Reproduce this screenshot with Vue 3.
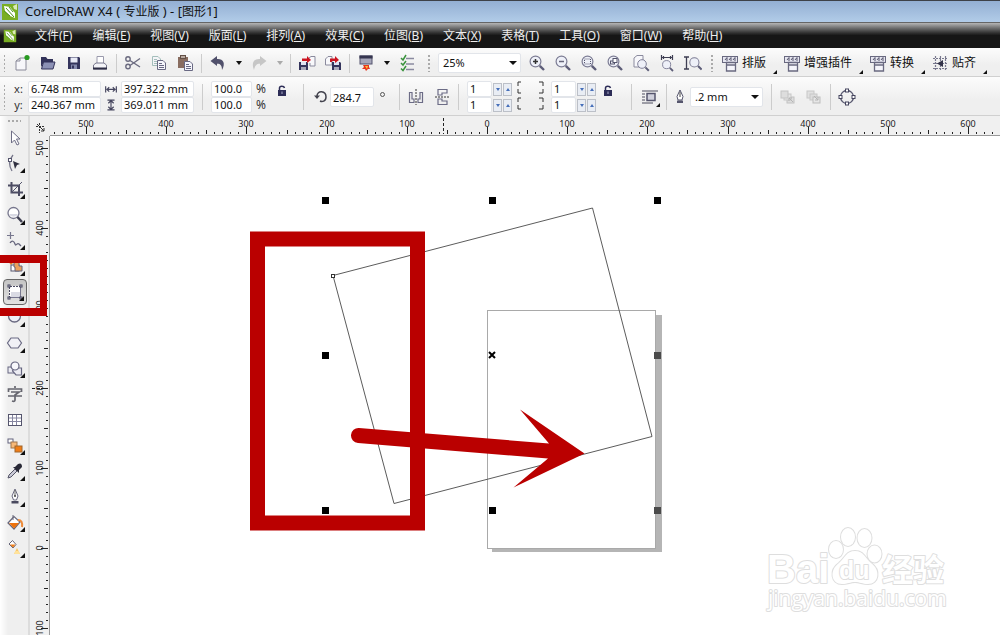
<script setup>
import { computed, onBeforeUnmount, onMounted, ref } from 'vue'

const menus = [
  ['文件', 'F'], ['编辑', 'E'], ['视图', 'V'], ['版面', 'L'], ['排列', 'A'], ['效果', 'C'],
  ['位图', 'B'], ['文本', 'X'], ['表格', 'T'], ['工具', 'O'], ['窗口', 'W'], ['帮助', 'H'],
]

const S = 'fill="none" stroke="#6c6c86" stroke-width="1.2"'
const lens = `<circle cx="7.5" cy="7.5" r="5.4" fill="#eef0f8" stroke="#7c7c94" stroke-width="1.2"/><path d="M11.8 11.8L16 16" stroke="#5d5d78" stroke-width="2.4"/>`
const floppy = (x, y) => `<g transform="translate(${x} ${y})"><path d="M0 0H8L9 1V8H0Z" fill="#34345c"/><rect x="2" width="5" height="3" fill="#dfe2f2"/><rect x="2" y="5" width="5" height="3" fill="#aab"/></g>`
const sheet = (x, y, c) => `<g transform="translate(${x} ${y})"><path d="M.5.5H6L8.5 3V9.500H.5Z" fill="#f5f5fb" stroke="${c}"/><path d="M2 3.500H5M2 5.500H7M2 7.500H7" stroke="${c}"/></g>`

const icons = {
  new: '<path d="M3 7L7 4H13V16H3Z" fill="#f7f7fa" stroke="#8a8a99"/><path d="M3 7H7V4" fill="none" stroke="#8a8a99"/><circle cx="14" cy="3.500" r="2.600" fill="#299a22"/>',
  open: '<path d="M2 3H7L8.500 5H14V8H5L2 13Z" fill="#33335a"/><path d="M4.500 8H16L14 15H2.500Z" fill="#8c91b5" stroke="#33335a"/>',
  save: '<path d="M3 3H14L15 4V15H3Z" fill="#34345c"/><rect x="5.500" y="3.500" width="7" height="5" fill="#e8eaf6"/><rect x="6" y="10.500" width="6" height="4.500" fill="#8489ad"/><rect x="7" y="11.500" width="2" height="3" fill="#34345c"/>',
  print: '<path d="M6 2.500H12.500V10H6Z" fill="#fff" stroke="#9a9aad"/><path d="M5 9L2.500 11V15H15.500V11L13 9Z" fill="#f4f4f8" stroke="#77778c"/><path d="M2 14.500H16" stroke="#2c2c44" stroke-width="2"/>',
  cut: '<g fill="none" stroke="#6b6b80" stroke-width="1.400"><circle cx="4" cy="5" r="2.200"/><circle cx="4" cy="12.500" r="2.200"/><path d="M6 6.500L16 13M6 11.500L16 4.500"/></g>',
  copy: `<g opacity=".6">${sheet(2, 2, '#6f9c97')}</g>${sheet(7, 6, '#696983')}`,
  paste: `<path d="M2 3H12V14H2Z" fill="#896d60"/><rect x="4.500" y="1.500" width="5" height="3" fill="#b8a9a0" stroke="#624f46"/>${sheet(8, 7, '#696983')}`,
  undo: '<path d="M1.500 7L8 2V5C14 4.500 17 9 13 16C13 11 11 9.500 8 9.700V12Z" fill="#50506b"/>',
  redo: '<path d="M16.500 7L10 2V5C4 4.500 1 9 4 16C5 11 7 9.500 10 9.700V12Z" fill="#c6c6c6"/>',
  import: `<path d="M11 4L13 2.500H17V12H12V9" fill="#f8f8fb" stroke="#8a8a9d"/>${floppy(1, 8)}<path d="M4 7V4.500H9V2L13 6L9 9V7Z" fill="#cb1420"/>`,
  export: `<path d="M1.500 5L4 2.500H8V11H1.500Z" fill="#f8f8fb" stroke="#8a8a9d"/>${floppy(8, 8)}<path d="M6 8V4.500H11V2L15 6L11 9V7H8V8Z" fill="#cb1420"/>`,
  launch: '<rect x="3" y="2" width="12" height="8" fill="#a6a6b9" stroke="#55556f"/><rect x="2.500" y="1.500" width="13" height="3" fill="#35354f"/><path d="M6 11H12V13L13 15H11L9 17L8 15L5 15L7 13Z" fill="#e7351c"/><path d="M8 12H11L10 15Z" fill="#ffc139"/>',
  options: '<path d="M8 4.500H16M8 10H16M8 15.500H16" stroke="#8a8aa0" stroke-width="1.500"/><path d="M3 4L5 6L8 1M3 9L5 11L8 7M3 14.500L5 16.500L8 12" fill="none" stroke="#3a933d" stroke-width="1.500"/>',
  zin: lens + '<path d="M5 7.500H10M7.500 5V10" stroke="#333" stroke-width="1.500"/>',
  zout: lens + '<path d="M5 7.500H10" stroke="#66667a" stroke-width="1.500"/>',
  zsel: lens + '<rect x="4.500" y="5" width="6" height="5" fill="none" stroke="#55556d" stroke-dasharray="1 1"/>',
  zall: lens + '<rect x="4.500" y="7" width="4" height="3" fill="none" stroke="#55556d"/><rect x="7" y="4.500" width="4" height="4" fill="#fff" stroke="#55556d"/>',
  zpage: '<path d="M2 4L5 1.500H11V13H2Z" fill="#f7f7fb" stroke="#8b8b9e"/><g transform="translate(4 4) scale(.8)">' + lens + '</g>',
  zwidth: '<path d="M3 3.500H15M3.500 1V6M14.500 1V6M5.500 2V5M12.500 2V5" stroke="#3d3d52" stroke-width="1.200"/><g transform="translate(3 5) scale(.75)">' + lens + '</g>',
  zheight: '<path d="M2.500 3V15M0 3H5M0 15H5" stroke="#3d3d52" stroke-width="1.300"/><g transform="translate(4 2) scale(.85)">' + lens + '</g>',
  plugin: '<rect x="1.500" y="2.500" width="15" height="6" fill="#e5e5ef" stroke="#696980"/><path d="M4 6L6 3.500V7M8 6L10 3.500V7M12 6L14 3.500V7" fill="none" stroke="#55556d"/><path d="M5.500 8.500H14.500V17H5.500ZM5.500 11H14.500" fill="#f5f5fb" stroke="#696980" stroke-width="1.300"/>',
  snap: '<path d="M4.500 2V17M9.500 2V17M14.500 2V17M2 4.500H17M2 9.500H17M2 14.500H17" stroke="#77778d" stroke-width="1.200" stroke-dasharray="2 1"/><path d="M6 9.500L12 6V13Z" fill="#333348"/>',
  hsize: '<path d="M3 6V13M15 6V13M4 9.500H14M7 7L4.500 9.500L7 12M11 7L13.500 9.500L11 12" fill="none" stroke="#45455e" stroke-width="1.300"/>',
  vsize: '<path d="M5 3.500H13M5 14.500H13M9 4V14M6 7L9 4L12 7M6 11L9 14L12 11" fill="none" stroke="#45455e" stroke-width="1.300"/>',
  lock: '<rect x="5" y="8" width="8" height="6" fill="#2d2d57"/><path d="M6.500 8V6C6.500 3.500 11 3.500 11.500 6" fill="none" stroke="#2d2d57" stroke-width="1.500"/><path d="M9 9.500V12" stroke="#aaabc8"/>',
  rotate: '<path d="M5 8C5 2 14 2.500 14 9C14 13.500 10 14 8 13" fill="none" stroke="#42424d" stroke-width="1.500"/><path d="M2 7.500H8L5 11Z" fill="#42424d"/>',
  mirh: `<path d="M2.500 4.500H5V11H7V14.500H2.500ZM15.500 4.500H13V11H11V14.500H15.500Z" ${S}/><path d="M9 1V17" stroke="#333" stroke-dasharray="2 1"/>`,
  mirv: `<path d="M5 1.500H14V5H9V7H5ZM5 16.500H14V13H9V11H5Z" ${S}/><path d="M2 9H17" stroke="#333" stroke-dasharray="2 1"/>`,
  wrap: '<path d="M1 3H17M1 6H4M1 9H4M1 12H4M1 15H12" stroke="#4d4d5e" stroke-width="1.200"/><rect x="6" y="5.500" width="8" height="7" fill="#d0d1dc" stroke="#55556d" stroke-width="1.500"/>',
  nib: '<path d="M9 2L6 8.500L7 12H11L12 8.500Z" fill="#fff" stroke="#55556d"/><path d="M9 4V9" stroke="#444"/><rect x="6" y="12.500" width="6" height="2.500" fill="#55556d"/>',
  front: '<rect x="8" y="9" width="7" height="6" fill="#ddd" stroke="#c2c2c2"/><rect x="5" y="6" width="7" height="6" fill="#e5e5e5" stroke="#c7c7c7"/><rect x="2" y="3" width="7" height="7" fill="#ddd" stroke="#c3c3c3"/><path d="M10 10L14 14M10 13V10H13" stroke="#b5b5b5" fill="none"/>',
  back: '<rect x="2" y="3" width="7" height="7" fill="#e1e1e1" stroke="#c7c7c7"/><rect x="5" y="6" width="7" height="6" fill="#ddd" stroke="#c7c7c7"/><rect x="8" y="9" width="7" height="6" fill="#e6e6e6" stroke="#bdbdbd"/><path d="M9 8L13 12M13 9V12H10" stroke="#b5b5b5" fill="none"/>',
  curve: '<circle cx="9" cy="9" r="6.500" fill="none" stroke="#55556d" stroke-width="1.300"/><g fill="#fff" stroke="#45455e"><rect x="7.500" y="1" width="3" height="3"/><rect x="7.500" y="14" width="3" height="3"/><rect x="1" y="7.500" width="3" height="3"/><rect x="14" y="7.500" width="3" height="3"/></g>',
  pick: '<path d="M5.500 2V14L8.500 11L11 16L13 15L10.500 10H14Z" fill="#fff" stroke="#6e6e86"/>',
  shape: '<path d="M7 1C2 7 3 12 6 17" fill="none" stroke="#77778b" stroke-width="1.300"/><rect x="2.500" y="4.500" width="3" height="3" fill="#fff" stroke="#55556d"/><path d="M7 7L14 10L11 11L9 15Z" fill="#303040"/>',
  crop: '<path d="M2 5.500H13V16M5.500 2V12.500H17" fill="none" stroke="#4c4c63" stroke-width="2"/><path d="M5 13L16 2" stroke="#55556d"/>',
  zoom: '<circle cx="7.500" cy="7" r="5.500" fill="#fff" stroke="#77778d" stroke-width="1.300"/><path d="M3 8H12A5 5 0 0 1 3 8" fill="#d8d9e3"/><path d="M11.500 11L16 16" stroke="#3e3e50" stroke-width="2.500"/>',
  free: '<path d="M4.500 1V8M1 4.500H8" stroke="#77778e" stroke-width="1.200"/><path d="M4 12C6 9 8 10 9 13C10 16 11 11 13 13L15 15" fill="none" stroke="#65657c" stroke-width="1.300"/>',
  smart: '<path d="M1 3L6 0L9 4L5 8Z" fill="#ea8123"/><rect x="5" y="8" width="8" height="6" fill="#fff" stroke="#55556d"/><path d="M8 4H13V9H16V14H9V10H8Z" fill="#eaa05c" stroke="#65657c"/>',
  rect: '<path d="M3 3H15V15H3Z" fill="#fff"/><path d="M5 9H14V14H5Z" fill="#dadbe4"/><path d="M3.500 4V14M4 3.500H14" stroke="#4c4c63" stroke-dasharray="2 1"/><path d="M14.500 4V14.500H4" fill="none" stroke="#77778f"/><g fill="#fff" stroke="#3f3f5a"><rect x="2" y="2" width="2" height="2"/><rect x="14" y="2" width="2" height="2"/><rect x="2" y="14" width="2" height="2"/><rect x="14" y="14" width="2" height="2"/></g>',
  ellipse: '<ellipse cx="8.500" cy="8" rx="6" ry="6" fill="#eeeef5" stroke="#696981" stroke-width="1.300"/>',
  polygon: '<path d="M5 4H12L15.500 9L12 14H5L1.500 9Z" fill="#f1f1f6" stroke="#6a6a83" stroke-width="1.200"/>',
  basic: '<rect x="2" y="7" width="6" height="6" fill="#ececf3" stroke="#666680"/><path d="M8 8H15.500V15H10L6.500 11Z" fill="#ececf3" stroke="#666680" stroke-width="1.200"/><circle cx="9" cy="6" r="4" fill="#f8f8fc" stroke="#666680" stroke-width="1.200"/>',
  text: '<path d="M9 1V3M2.500 7V4H15.500V7M5 7H13L9 10V15Q9 17 6 16M2 11H16" fill="none" stroke="#66666f" stroke-width="1.700"/>',
  table: '<rect x="2.500" y="3.500" width="13" height="11" fill="#fff" stroke="#55556d"/><path d="M3 7H15M3 10.500H15M6.500 4V14M10.500 4V14" stroke="#8585a0"/>',
  blend: '<rect x="2" y="2" width="5" height="4" fill="#fff" stroke="#62627c"/><rect x="5" y="5" width="6" height="6" fill="#f7b978" stroke="#a0764c"/><rect x="9" y="9" width="7" height="6" fill="#ef7d16" stroke="#a0662c"/>',
  dropper: '<path d="M2 16L3 13L9 7L11 9L5 15Z" fill="#c9c9d6" stroke="#555568"/><path d="M7 5L9 5L12 2Q16 0 16 5L13 8V11Z" fill="#292936"/>',
  outline: '<path d="M9 1L6 8L7.500 12H10.500L12 8Z" fill="#fff" stroke="#6a6a80"/><path d="M9 2V8" stroke="#666"/><circle cx="9" cy="8" r="1" fill="#444"/><path d="M5.500 13H12.500V15.500H5.500Z" fill="#4a4a5f"/>',
  fill: '<path d="M2 9L8 2.500L14 8L8 15Z" fill="#fff" stroke="#66667a" stroke-width="1.200"/><path d="M3 9H13L8 14.500Z" fill="#ed720d"/><path d="M7 6V1" stroke="#66667a"/><path d="M12 6Q17 6 16 13" fill="none" stroke="#ee8b38" stroke-width="2"/>',
  ifill: '<path d="M3 5L6.500 1.500L10 5.500L7 9Z" fill="#fff" stroke="#66667a"/><path d="M4 5.500H9.500L7 8.500Z" fill="#ef7d16"/><path d="M11 9L14 15H8Z" fill="#f8c76a"/><path d="M9.500 12H12.500L14 15H8Z" fill="#ffe29a"/>',
  logo: '<rect x="1" y="1" width="16" height="16" fill="#79ae23"/><path d="M3 3L9 4L14 10L14 15L9 13L4 8Z" fill="#fff"/><path d="M5 5L13 14M8 4L12 9M3 8L9 13" stroke="#4e941d"/><path d="M12 3L16 1V7L13 6Z" fill="#dbe9b8"/>',
}

const toolbar = [
  ['grip'], ['new', '新建'], ['open', '打开'], ['save', '保存'], ['print', '打印'], ['sep'],
  ['cut', '剪切'], ['copy', '复制'], ['paste', '粘贴'], ['sep'],
  ['undo', '撤消'], ['caret', '撤消列表'], ['redo', '重做'], ['caret', '重做列表', 'off'], ['sep'],
  ['import', '导入'], ['export', '导出'], ['sep'],
  ['launch', '应用程序启动器'], ['caret', '启动列表'], ['options', '选项'], ['grip', '', 'wide'],
]
const zooms = [
  ['zin', '放大'], ['zout', '缩小'], ['zsel', '缩放选定范围'], ['zall', '缩放全部对象'],
  ['zpage', '显示页面'], ['zwidth', '按页宽显示'], ['zheight', '按页高显示'],
]
const plugins = [['plugin', '排版'], ['plugin', '增强插件'], ['plugin', '转换'], ['snap', '贴齐']]
const tools = [
  ['pick', '挑选'], ['shape', '形状', 1], ['crop', '裁剪', 1], ['zoom', '缩放', 1], ['free', '手绘', 1],
  ['smart', '智能填充', 1], ['rect', '矩形', 1], ['ellipse', '椭圆形', 1], ['polygon', '多边形', 1],
  ['basic', '基本形状', 1], ['text', '文本'], ['table', '表格'], ['blend', '调和', 1],
  ['dropper', '滴管', 1], ['outline', '轮廓', 1], ['fill', '填充', 1], ['ifill', '交互式填充', 1],
]

// The rulers cover the visible canvas and follow the window.
const canvas = ref(null)
const area = ref({ w: 950, h: 499 })
let observer
onMounted(() => {
  observer = new ResizeObserver(() => {
    area.value = { w: canvas.value.clientWidth, h: canvas.value.clientHeight }
  })
  observer.observe(canvas.value)
})
onBeforeUnmount(() => observer.disconnect())

const ruler = (zero, step, length) => {
  const ticks = []
  for (let i = Math.ceil(-zero / step); zero + i * step < length; i++) {
    ticks.push({ at: Math.round(zero + i * step), major: i % 10 === 0, half: i % 5 === 0, label: Math.abs(i * 10) })
  }
  return ticks
}
const hTicks = computed(() => ruler(437, 8.017, area.value.w))
const vTicks = computed(() => ruler(412, 8, area.value.h))
const tickSize = (t) => (t.major ? 7 : t.half ? 4 : 2)

const handles = [
  [322, 197, 0], [489, 197, 0], [654, 197, 0], [322, 352, 0], [654, 352, 1],
  [322, 507, 0], [489, 507, 0], [654, 507, 1],
]
</script>

<template>
  <div class="app">
    <header class="title">
      <svg class="ico" viewBox="0 0 18 18" v-html="icons.logo" />
      <h1>CorelDRAW X4 ( <span>专业版</span> ) - [<span>图形</span>1]</h1>
    </header>

    <nav class="menu">
      <svg class="ico small" viewBox="0 0 18 18" v-html="icons.logo" />
      <button v-for="m in menus" :key="m[1]" type="button">{{ m[0] }}(<u>{{ m[1] }}</u>)</button>
    </nav>

    <div class="bar standard">
      <template v-for="(t, i) in toolbar" :key="i">
        <i v-if="t[0] === 'grip'" class="grip" :class="t[2]" />
        <i v-else-if="t[0] === 'sep'" class="sep" />
        <button v-else-if="t[0] === 'caret'" type="button" class="caret" :class="t[2]" :aria-label="t[1]" />
        <button v-else type="button" class="tool" :aria-label="t[1]">
          <svg class="ico" viewBox="0 0 18 18" v-html="icons[t[0]]" />
        </button>
      </template>
      <div class="select zoom">
        <select aria-label="缩放级别"><option>25%</option><option>100%</option></select>
      </div>
      <button v-for="z in zooms" :key="z[0]" type="button" class="tool" :aria-label="z[1]">
        <svg class="ico" viewBox="0 0 18 18" v-html="icons[z[0]]" />
      </button>
      <i class="grip mid" />
      <button v-for="p in plugins" :key="p[1]" type="button" class="plugin">
        <svg class="ico" viewBox="0 0 18 18" v-html="icons[p[0]]" /><span>{{ p[1] }}</span>
      </button>
    </div>

    <div class="bar props">
      <i class="grip tall" />
      <div class="pair position">
        <label for="px">x:</label><input id="px" value="6.748 mm">
        <label for="py">y:</label><input id="py" value="240.367 mm">
      </div>
      <div class="pair size">
        <label for="sw" aria-label="宽度"><svg class="ico" viewBox="0 0 18 18" v-html="icons.hsize" /></label><input id="sw" value="397.322 mm">
        <label for="sh" aria-label="高度"><svg class="ico" viewBox="0 0 18 18" v-html="icons.vsize" /></label><input id="sh" value="369.011 mm">
      </div>
      <i class="sep prop" />
      <div class="pair scale">
        <input id="kx" value="100.0"><label for="kx">%</label>
        <input id="ky" value="100.0"><label for="ky">%</label>
      </div>
      <button type="button" class="tool raised" aria-label="锁定比例"><svg class="ico" viewBox="0 0 18 18" v-html="icons.lock" /></button>
      <i class="sep prop after" />
      <div class="angle">
        <label for="an" aria-label="旋转角度"><svg class="ico" viewBox="0 0 18 18" v-html="icons.rotate" /></label>
        <input id="an" value="284.7"><span class="degree" />
      </div>
      <i class="sep angleend" />
      <button type="button" class="tool" aria-label="水平镜像"><svg class="ico" viewBox="0 0 18 18" v-html="icons.mirh" /></button>
      <button type="button" class="tool" aria-label="垂直镜像"><svg class="ico" viewBox="0 0 18 18" v-html="icons.mirv" /></button>
      <i class="sep" />
      <div class="corners">
        <div v-for="n in 2" :key="'l' + n" class="spin">
          <input value="1" :aria-label="'左边角圆滑度 ' + n">
          <button type="button" class="dn" aria-label="减小" /><button type="button" class="up" aria-label="增大" />
        </div>
      </div>
      <svg class="brackets" viewBox="0 0 38 34">
        <path d="M9 2H6V6M6 9V13H9M27 2H31V6M31 9V13H27M9 18H6V22M6 25V29H9M27 18H31V22M31 25V29H27" />
      </svg>
      <div class="corners">
        <div v-for="n in 2" :key="'r' + n" class="spin">
          <input value="1" :aria-label="'右边角圆滑度 ' + n">
          <button type="button" class="dn" aria-label="减小" /><button type="button" class="up" aria-label="增大" />
        </div>
      </div>
      <button type="button" class="tool raised" aria-label="全部圆角"><svg class="ico" viewBox="0 0 18 18" v-html="icons.lock" /></button>
      <i class="sep wraps" />
      <button type="button" class="tool flyout" aria-label="段落文本换行"><svg class="ico" viewBox="0 0 18 18" v-html="icons.wrap" /></button>
      <i class="sep" />
      <label for="lw" class="tool nib" aria-label="轮廓宽度"><svg class="ico" viewBox="0 0 18 18" v-html="icons.nib" /></label>
      <div class="select width">
        <select id="lw"><option>.2 mm</option><option>.5 mm</option></select>
      </div>
      <i class="sep wide" />
      <button type="button" class="tool" aria-label="到图层前面"><svg class="ico" viewBox="0 0 18 18" v-html="icons.front" /></button>
      <button type="button" class="tool" aria-label="到图层后面"><svg class="ico" viewBox="0 0 18 18" v-html="icons.back" /></button>
      <i class="sep" />
      <button type="button" class="tool" aria-label="转换为曲线"><svg class="ico" viewBox="0 0 18 18" v-html="icons.curve" /></button>
    </div>

    <div class="work">
      <aside class="toolbox">
        <i class="hgrip" />
        <div class="tools">
          <button
            v-for="t in tools" :key="t[0]" type="button" :aria-label="t[1]"
            :class="{ flyout: t[2], active: t[0] === 'rect' }"
          >
            <svg class="ico" viewBox="0 0 18 18" v-html="icons[t[0]]" />
          </button>
        </div>
      </aside>

      <div class="origin">
        <svg viewBox="0 0 20 20">
          <path d="M9.500 7V17M6 10.500H15" stroke-dasharray="2 1" /><path d="M7 8L14 15M14 12V15H11" />
        </svg>
      </div>

      <svg class="hruler">
        <g v-for="t in hTicks" :key="t.at">
          <line :x1="t.at + .5" :x2="t.at + .5" :y1="18 - tickSize(t)" y2="18" />
          <text v-if="t.major" :x="t.at" y="11">{{ t.label }}</text>
        </g>
        <line x1="393.5" x2="393.5" y1="2" y2="18" stroke-dasharray="3 2" />
      </svg>

      <svg class="vruler">
        <g v-for="t in vTicks" :key="t.at">
          <line :y1="t.at + .5" :y2="t.at + .5" :x1="18 - tickSize(t)" x2="18" />
          <text v-if="t.major" :transform="`translate(13 ${t.at}) rotate(-90)`">{{ t.label }}</text>
        </g>
        <line x1="2" x2="18" y1="252.5" y2="252.5" stroke-dasharray="3 2" />
      </svg>

      <main ref="canvas" class="canvas">
        <svg class="drawing">
          <g transform="translate(-50 -136)">
            <path d="M492 549H656V315H662V552H492Z" fill="#b5b5b5" />
            <rect x="487.500" y="310.500" width="168" height="238" fill="#fff" stroke="#a9a9a9" />
            <path d="M333 275.500L592.500 208L652 436.500L394 503.500Z" fill="none" stroke="#5c5c5c" />
            <rect x="331.500" y="274.500" width="3" height="3" fill="#fff" stroke="#333" />
            <path d="M489 352L495 358M495 352L489 358" stroke="#000" stroke-width="2" />
            <rect
              v-for="(h, i) in handles" :key="i" :x="h[0]" :y="h[1]" width="7" height="7"
              :fill="h[2] ? '#4a4a4a' : '#000'"
            />
            <rect x="257.500" y="239" width="160" height="284" fill="none" stroke="#ba0000" stroke-width="15" />
            <path
              d="M359 428L549 443.500L520 409.500L584.500 453.500L513.500 487.500L548 458.500L358 443A7.500 7.500 0 0 1 359 428Z"
              fill="#ba0000"
            />
            <g class="watermark">
              <text x="767" y="583" class="bai">Bai</text>
              <ellipse cx="836" cy="549.500" rx="7" ry="8.500" />
              <ellipse cx="848" cy="537" rx="7" ry="9" />
              <ellipse cx="864.500" cy="538" rx="7" ry="9" />
              <ellipse cx="874.500" cy="554" rx="7" ry="8.500" />
              <path d="M855 551C846 551 845 558 839 563C829 570 831 584 842 584C848 584 850 582 855 582C860 582 862 584 868 584C879 584 881 570 871 563C865 558 864 551 855 551Z" />
              <text x="839" y="579" class="du">du</text>
              <text x="882" y="581" class="jy">经验</text>
              <text x="768" y="606" class="url">jingyan.baidu.com</text>
            </g>
          </g>
        </svg>
      </main>
      <div class="callout" />
    </div>
  </div>
</template>

<style>
body {
  overflow: hidden;
}
</style>

<style scoped>
.app {
  display: flex;
  flex-direction: column;
  height: 100vh;
  background: #fff;
  color: #111;
  font: 11px/16px "Noto Sans", "Noto Sans CJK SC", sans-serif;
  overflow: hidden;
}
button {
  margin: 0;
  padding: 0;
  border: 0;
  background: none;
  color: inherit;
  font: inherit;
}
input,
select {
  box-sizing: border-box;
  width: 100%;
  min-width: 0;
  height: 16px;
  margin: 0;
  padding: 0 2px;
  border: 1px solid #e2e5ea;
  border-radius: 2px;
  background: #fff;
  color: #111;
  font: inherit;
}
.ico {
  display: block;
  flex: none;
  width: 18px;
  height: 18px;
}
.title {
  display: flex;
  align-items: center;
  gap: 6px;
  box-sizing: border-box;
  height: 22px;
  flex: none;
  border-top: 1px solid #3d4148;
  background: linear-gradient(#93afd3, #b2cce8);
}
.title .ico {
  margin-left: 1px;
}
.title h1 {
  margin: 0;
  font: 13px/20px "Noto Sans", "Noto Sans CJK SC", sans-serif;
}
.title span {
  font-size: 12px;
}
.menu {
  display: flex;
  align-items: center;
  gap: 20px;
  box-sizing: border-box;
  height: 26px;
  flex: none;
  padding-left: 3px;
  border-top: 1px solid #666;
  background: linear-gradient(#b5b5b5, #707070 20%, #303030 40%, #161616 50%, #161616);
  color: #eee;
  font-size: 12px;
  white-space: nowrap;
}
.menu .small {
  width: 14px;
  height: 16px;
  margin-right: -2px;
}
.bar {
  display: flex;
  align-items: center;
  box-sizing: border-box;
  flex: none;
  padding-top: 2px;
  border-bottom: 1px solid #d0d0d0;
  background: linear-gradient(#fcfcfc, #efefef 60%);
  white-space: nowrap;
}
.standard {
  height: 29px;
}
.props {
  height: 39px;
}
.grip {
  flex: none;
  width: 9px;
  height: 18px;
  background: radial-gradient(circle, #aaa 1px, transparent 1px) 0 0 / 9px 4px;
}
.grip.wide {
  width: 18px;
  background-size: 18px 4px;
}
.grip.mid {
  width: 12px;
  background-size: 12px 4px;
}
.grip.tall {
  height: 26px;
}
.sep {
  flex: none;
  width: 1px;
  height: 19px;
  margin: 0 3px;
  background: #ccc;
}
.props .sep {
  height: 26px;
}
.tool {
  display: flex;
  flex: none;
  align-items: center;
  justify-content: center;
  width: 26px;
  height: 24px;
}
.caret {
  flex: none;
  width: 15px;
  height: 20px;
}
.caret::before,
.select::after {
  content: "";
  display: block;
  width: 0;
  margin: auto;
  border: 3px solid transparent;
  border-top: 4px solid #111;
  border-bottom: 0;
}
.caret.off::before {
  border-top-color: #aaa;
}
.select {
  position: relative;
  flex: none;
}
.select select {
  height: 20px;
  padding: 0 4px;
  appearance: none;
}
.select::after {
  position: absolute;
  top: 8px;
  right: 4px;
  border-width: 4px 4px 0;
  pointer-events: none;
}
.zoom {
  width: 83px;
  margin-right: 3px;
}
.width {
  width: 73px;
}
.plugin {
  position: relative;
  display: flex;
  flex: none;
  align-items: center;
  gap: 3px;
  height: 26px;
  padding: 0 14px 0 3px;
  font-size: 12px;
}
.plugin::after,
.flyout::after {
  content: "";
  position: absolute;
  right: 3px;
  bottom: 2px;
  border-bottom: 4px solid #111;
  border-left: 4px solid transparent;
}
.flyout {
  position: relative;
}
.pair {
  display: grid;
  flex: none;
  align-items: center;
  grid-template-rows: 16px 16px;
}
.pair label {
  display: flex;
  justify-content: center;
  color: #333;
}
.pair .ico {
  width: 16px;
  height: 16px;
}
.position {
  grid-template-columns: 19px 73px;
}
.size {
  grid-template-columns: 20px 73px;
}
.scale {
  grid-template-columns: 41px 18px;
}
.scale label {
  font-size: 12px;
}
.sep.prop {
  margin: 0 8px;
}
.raised {
  margin: 0 0 12px -1px;
}
.props .sep.after {
  margin: 0 8px;
}
.angle {
  display: flex;
  flex: none;
  align-items: center;
}
.angle input {
  width: 44px;
  height: 20px;
}
.degree {
  box-sizing: border-box;
  width: 5px;
  height: 5px;
  margin: 0 0 6px 6px;
  border: 1px solid #555;
  border-radius: 50%;
}
.props .sep.angleend {
  margin: 0 3px 0 14px;
}
.corners {
  flex: none;
  margin-left: 5px;
}
.spin {
  display: flex;
  align-items: center;
  width: 45px;
  height: 16px;
}
.spin input {
  width: 25px;
  flex: none;
}
.spin button {
  flex: none;
  box-sizing: border-box;
  width: 9px;
  height: 13px;
  margin-left: 1px;
  border: 1px solid #bcc0c8;
  background: #e9edf4;
}
.spin button::before {
  content: "";
  display: block;
  width: 0;
  margin: auto;
  border: 2px solid transparent;
}
.spin .dn::before {
  border-top: 3px solid #466fba;
  border-bottom: 0;
}
.spin .up::before {
  border-bottom: 3px solid #466fba;
  border-top: 0;
}
.brackets {
  flex: none;
  width: 38px;
  height: 34px;
  margin-right: -4px;
  fill: none;
  stroke: #333;
}
.props .sep.wraps {
  margin: 0 5px 0 10px;
}
.nib {
  width: 20px;
}
.props .sep.wide {
  margin: 0 3px 0 8px;
}
.work {
  position: relative;
  display: grid;
  flex: 1;
  min-height: 0;
  grid-template-columns: 30px 20px minmax(0, 1fr);
  grid-template-rows: 20px minmax(0, 1fr);
}
.toolbox {
  box-sizing: border-box;
  grid-row: 1 / 3;
  padding-top: 3px;
  border-right: 2px solid #dcdcdc;
  background: linear-gradient(90deg, #fff, #efefef 8px);
}
.hgrip {
  display: block;
  height: 4px;
  margin: 0 7px 2px;
  background: radial-gradient(circle, #aaa 1px, transparent 1px) 0 0 / 4px 4px;
}
.tools {
  display: grid;
  height: 436px;
  grid-template-rows: repeat(17, 1fr);
}
.tools button {
  box-sizing: border-box;
  display: flex;
  align-items: center;
  justify-content: center;
  width: 24px;
  margin-left: 3px;
}
.tools .flyout::after {
  right: 2px;
  bottom: 3px;
  border-bottom-width: 5px;
  border-left-width: 5px;
}
.tools .active {
  border: 1px solid #666;
  border-radius: 4px;
  background: linear-gradient(#c4c4c4, #e2e2e2);
}
.origin,
.hruler,
.vruler {
  background: #f0f0f0;
}
.origin svg {
  display: block;
  fill: none;
  stroke: #333;
}
.hruler,
.vruler {
  display: block;
  box-sizing: border-box;
  width: 100%;
  height: 100%;
  stroke: #222;
}
.hruler {
  border-bottom: 1px solid #999;
}
.vruler {
  border-right: 1px solid #999;
}
.hruler text,
.vruler text {
  fill: #222;
  stroke: none;
  font-size: 9px;
  text-anchor: middle;
}
.canvas {
  min-width: 0;
  min-height: 0;
}
.drawing {
  display: block;
  width: 100%;
  height: 100%;
}
.watermark {
  fill: #fff;
  stroke: #dedede;
  stroke-width: 2;
  stroke-linejoin: round;
  paint-order: stroke;
}
.bai {
  font: bold 40px "Liberation Sans", sans-serif;
}
.du {
  font: bold 25px "Liberation Sans", sans-serif;
}
.jy {
  font: bold 31px "Noto Sans CJK SC", sans-serif;
}
.url {
  font: 21px "Open Sans", sans-serif;
}
.callout {
  position: absolute;
  top: 139px;
  left: 0;
  box-sizing: border-box;
  width: 47px;
  height: 61px;
  border: solid #ba0000;
  border-width: 8px 7px 8px 0;
  pointer-events: none;
}
</style>
